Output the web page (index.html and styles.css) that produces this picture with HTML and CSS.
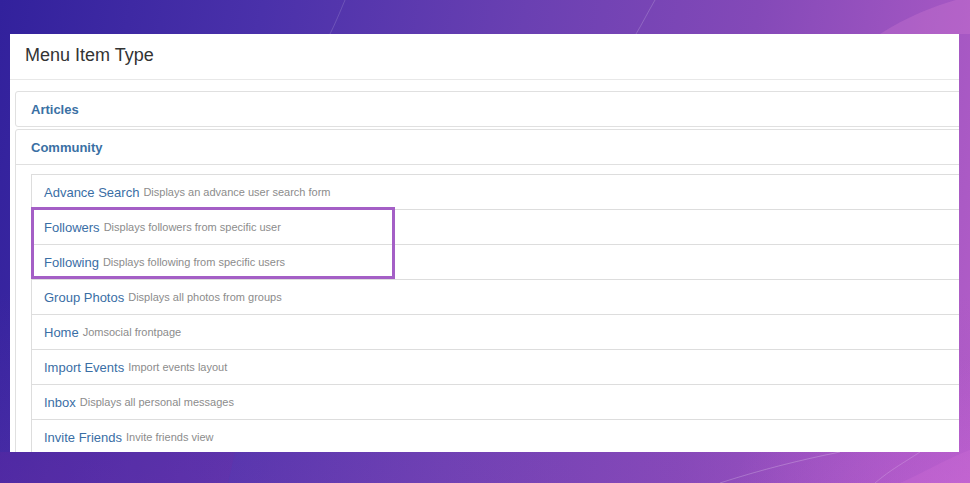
FILE: index.html
```html
<!DOCTYPE html>
<html lang="en">
<head>
  <meta charset="UTF-8">
  <meta name="viewport" content="width=device-width, initial-scale=1">
  <title>Menu Item Type</title>
  <link rel="stylesheet" href="styles.css">
</head>
<body>

  <!-- background swooshes -->
  <svg class="bg" width="970" height="483" viewBox="0 0 970 483">
    <path d="M880 34 C 915 12, 945 2, 975 -5 L 975 34 Z" fill="rgba(230,140,220,0.22)"/>
    <path d="M655 0 C 648 12, 642 24, 636 34" stroke="rgba(255,255,255,0.18)" fill="none"/>
    <path d="M345 0 C 340 12, 335 24, 330 34" stroke="rgba(255,255,255,0.15)" fill="none"/>
    <path d="M235 452 L 228 483 L 0 483 L 0 452 Z" fill="rgba(120,40,160,0.2)"/>
    <path d="M720 483 C 760 470, 800 460, 840 452" stroke="rgba(255,255,255,0.22)" fill="none"/>
    <path d="M875 483 C 890 470, 905 462, 920 452" stroke="rgba(255,255,255,0.18)" fill="none"/>
    <path d="M1000 440 C 960 450, 930 470, 900 483 L 970 483 Z" fill="rgba(220,120,220,0.22)"/>
  </svg>

  <div class="modal">
    <div class="modal-header">
      <h3>Menu Item Type</h3>
    </div>
    <div class="modal-body">
      <div class="panel">
        <div class="panel-heading">Articles</div>
      </div>
      <div class="panel">
        <div class="panel-heading open">Community</div>
        <div class="panel-body">
          <ul class="list">
            <li><a>Advance Search</a> <small>Displays an advance user search form</small></li>
            <li><a>Followers</a> <small>Displays followers from specific user</small></li>
            <li><a>Following</a> <small>Displays following from specific users</small></li>
            <li><a>Group Photos</a> <small>Displays all photos from groups</small></li>
            <li><a>Home</a> <small>Jomsocial frontpage</small></li>
            <li><a>Import Events</a> <small>Import events layout</small></li>
            <li><a>Inbox</a> <small>Displays all personal messages</small></li>
            <li><a>Invite Friends</a> <small>Invite friends view</small></li>
            <div class="highlight"></div>
          </ul>
        </div>
      </div>
    </div>
  </div>

</body>
</html>
```

FILE: styles.css
```css
* { margin:0; padding:0; box-sizing:border-box; }
html, body { width:970px; height:483px; overflow:hidden; }
body {
  position:relative;
  font-family:'Liberation Sans', Arial, sans-serif;
  color:#333;
  background:
    radial-gradient(ellipse 260px 140px at 990px 500px, rgba(200,100,215,0.55), transparent),
    linear-gradient(180deg, transparent 60%, rgba(150,70,190,0.15) 100%),
    linear-gradient(100deg, #32219c 0%, #4a31aa 25%, #6a40b2 50%, #8449b8 72%, #b45ec8 100%);
  padding-top:34px;
}
.bg { position:absolute; left:0; top:0; z-index:0; }

.modal {
  position:relative; z-index:1;
  margin-left:10px;
  width:949px; height:418px;
  background:#fff;
  overflow:hidden;
}
.modal-header {
  height:46px;
  padding:0 15px 2px;
  display:flex; align-items:center;
  border-bottom:1px solid #e8e8e8;
}
.modal-header h3 { font-size:18px; font-weight:normal; color:#333; }

.modal-body { padding:11px 0 0 5px; }

.panel {
  border:1px solid #e0e0e0;
  border-radius:3px 0 0 3px;
  margin-right:-10px;
  margin-bottom:2px;
}
.panel-heading {
  height:34px;
  padding:0 15px;
  display:flex; align-items:center;
  font-size:13px; font-weight:bold;
  color:#3a70a4;
}
.panel-heading.open { height:35px; border-bottom:1px solid #e0e0e0; }
.panel-body { padding:9px 0 0 15px; }

.list {
  position:relative;
  list-style:none;
  border-left:1px solid #ddd;
}
.list li {
  height:35px;
  padding-left:12px;
  border-top:1px solid #ddd;
  display:flex; align-items:center;
  white-space:nowrap;
}
.list li a { font-size:13px; color:#3a6ea5; }
.list li small { font-size:11px; color:#8c8c8c; margin-left:4px; }

.highlight {
  position:absolute;
  left:-1px; top:33px;
  width:364px; height:72px;
  border:3px solid #a45fc6;
  pointer-events:none;
}
```
